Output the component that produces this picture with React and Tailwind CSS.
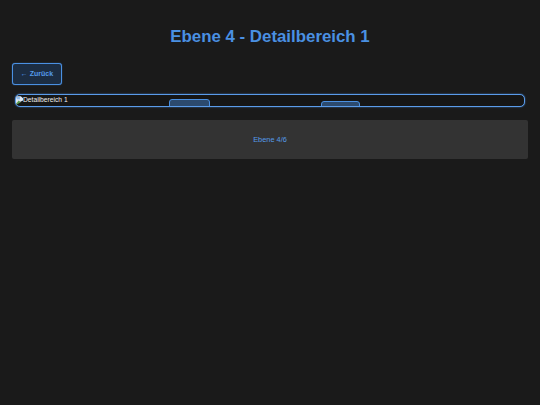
const font = { fontFamily: '"Liberation Sans", Arial, sans-serif' };

function BrokenImage() {
  return (
    <svg width="7" height="9" viewBox="0 0 8 10" className="shrink-0">
      <path d="M0 0h5.5L8 2.5V5L0 9z" fill="#dfe8f2" />
      <path d="M0 9l3-4 2.5 2L0 10z" fill="#5a9a4a" />
      <path d="M1 1h3.5v2.5H1z" fill="#8fbcec" />
    </svg>
  );
}

export default function App() {
  return (
    <div style={font} className="flex min-h-[405px] flex-col bg-[#1a1a1a] p-3">
      <h1 className="mt-[12px] text-center text-[16.85px] leading-[25px] font-bold text-[#4a90e2]">
        Ebene 4 - Detailbereich 1
      </h1>

      <div className="mt-[14px] flex">
        <button className="h-[22px] w-[50px] rounded-[3px] border border-[#4a90e2] bg-[#1c2d42] text-center text-[7px] font-bold text-[#559bea] shadow-[0_0_1px_#4a90e2]">
          ← Zurück
        </button>
      </div>

      <div className="relative mx-[3px] mt-[9px] h-[13px] overflow-hidden rounded-[5px] border border-[#5a9bea] bg-[#161616] shadow-[0_0_1.5px_#4a90e2]">
        <div className="flex h-[10px] items-center text-[6.7px] leading-[10px] text-[#f0f0f0]">
          <BrokenImage />
          <span>Detailbereich 1</span>
        </div>
        <div className="absolute top-[4px] left-[153px] h-[12px] w-[41px] rounded-[3px] border border-[#4a90e2] bg-[#2c4a6e]" />
        <div className="absolute top-[6px] left-[305px] h-[12px] w-[39px] rounded-[3px] border border-[#4a90e2] bg-[#2c4a6e]" />
      </div>

      <div className="mt-[13px] flex h-[39px] items-center justify-center rounded-[2px] bg-[#333333] text-[7.4px] text-[#559bea]">
        Ebene 4/6
      </div>
    </div>
  );
}
